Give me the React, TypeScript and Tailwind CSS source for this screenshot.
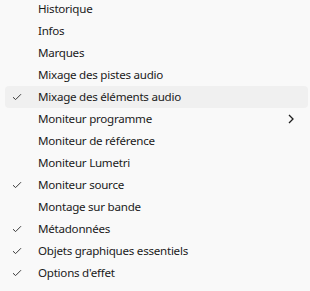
const items: { label: string; checked?: boolean; submenu?: boolean; active?: boolean }[] = [
  { label: 'Historique' },
  { label: 'Infos' },
  { label: 'Marques' },
  { label: 'Mixage des pistes audio' },
  { label: 'Mixage des éléments audio', checked: true, active: true },
  { label: 'Moniteur programme', submenu: true },
  { label: 'Moniteur de référence' },
  { label: 'Moniteur Lumetri' },
  { label: 'Moniteur source', checked: true },
  { label: 'Montage sur bande' },
  { label: 'Métadonnées', checked: true },
  { label: 'Objets graphiques essentiels', checked: true },
  { label: "Options d'effet", checked: true },
  { label: 'Outils' },
]

function CheckIcon() {
  return (
    <svg width="10" height="8" viewBox="0 0 10 8" fill="none">
      <path d="M1 4.2 L3.6 6.6 L9 1.2" stroke="#3a3a3a" strokeWidth="1" />
    </svg>
  )
}

function ChevronIcon() {
  return (
    <svg width="6" height="10" viewBox="0 0 6 10" fill="none">
      <path d="M1 1 L5 5 L1 9" stroke="#1f1f1f" strokeWidth="1.3" />
    </svg>
  )
}

export default function App() {
  return (
    <div
      className="w-[310px] h-[291px] overflow-hidden bg-[#f9f9f9] text-[#1b1b1b]"
      style={{ fontFamily: '"Segoe UI", "Noto Sans", sans-serif' }}
    >
      <ul className="-mt-[2px] flex flex-col">
        {items.map((item) => (
          <li
            key={item.label}
            className={`mx-[5px] mr-[2px] h-[22px] flex items-center rounded-[4px] ${
              item.active ? 'bg-[#f0f0f0]' : ''
            }`}
          >
            <span className="w-[33px] flex justify-center pr-[10px]">
              {item.checked && <CheckIcon />}
            </span>
            <span className="flex-1 text-[11.6px] tracking-[-0.25px] leading-none">{item.label}</span>
            {item.submenu && (
              <span className="w-[20px] flex justify-start">
                <ChevronIcon />
              </span>
            )}
          </li>
        ))}
      </ul>
    </div>
  )
}
